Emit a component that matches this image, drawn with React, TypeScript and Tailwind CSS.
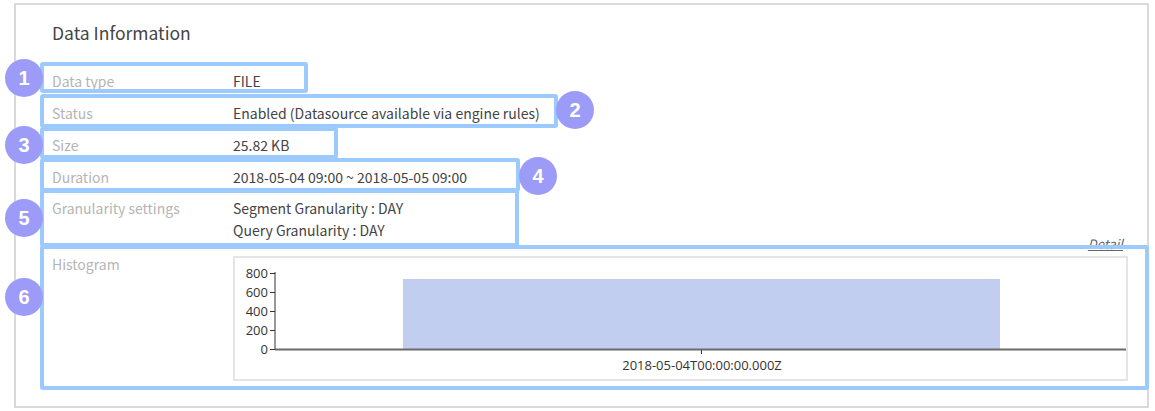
const rows = [
  { label: "Data type", value: "FILE" },
  { label: "Status", value: "Enabled (Datasource available via engine rules)" },
  { label: "Size", value: "25.82 KB" },
  { label: "Duration", value: "2018-05-04 09:00 ~ 2018-05-05 09:00" },
];

const yTicks = [
  { v: "800", y: 17 },
  { v: "600", y: 36 },
  { v: "400", y: 55 },
  { v: "200", y: 74 },
  { v: "0", y: 93 },
];

function Histogram() {
  return (
    <div className="relative w-[895px] h-[125px] border-2 border-[#e5e5e5] mt-[2px]">
      <svg width="891" height="121" className="block">
        <rect x="168" y="21" width="597" height="70" fill="#c1cef0" />
        <line x1="40" y1="14" x2="40" y2="92" stroke="#333" strokeWidth="1" />
        <line x1="40" y1="91.5" x2="891" y2="91.5" stroke="#6b6b6b" strokeWidth="2" />
        {yTicks.map((t) => (
          <g key={t.v}>
            <line x1="35" y1={t.y - 2 + 0.5} x2="40" y2={t.y - 2 + 0.5} stroke="#333" />
            <text
              x="33"
              y={t.y + 2.5}
              textAnchor="end"
              fontSize="13"
              fill="#333"
              fontFamily="'Open Sans', sans-serif"
            >
              {t.v}
            </text>
          </g>
        ))}
        <line x1="466.5" y1="92" x2="466.5" y2="96" stroke="#333" />
        <text
          x="467"
          y="112"
          textAnchor="middle"
          fontSize="13"
          fill="#333"
          fontFamily="'Open Sans', sans-serif"
        >
          2018-05-04T00:00:00.000Z
        </text>
      </svg>
    </div>
  );
}

function Marker({ n, x, y }: { n: number; x: number; y: number }) {
  return (
    <div
      className="absolute w-[38px] h-[38px] rounded-full bg-[#9c9cf8] flex items-center justify-center text-white text-[20px] font-bold font-['Liberation_Sans',sans-serif]"
      style={{ left: x - 19, top: y - 19 }}
    >
      {n}
    </div>
  );
}

function HighlightBox({ l, t, w, h }: { l: number; t: number; w: number; h: number }) {
  return (
    <div
      className="absolute border-4 border-[#9ccafc] rounded-[3px]"
      style={{ left: l, top: t, width: w, height: h }}
    />
  );
}

export default function App() {
  return (
    <div className="relative w-[1155px] h-[411px] bg-white font-['Noto_Sans_CJK_KR','Noto_Sans',sans-serif] overflow-hidden">
      <div className="ml-[14px] mt-[3px] w-[1135px] h-[405px] border-2 border-[#dadada] pl-[36px] pt-[16px]">
        <h2 className="text-[17.5px] leading-6 text-[#444]">Data Information</h2>
        <div className="mt-[20px]">
          {rows.map((r) => (
            <div key={r.label} className="flex items-center h-8 text-[14px]">
              <div className="w-[181px] text-[#b5b5b5]">{r.label}</div>
              <div className="text-[#444]">{r.value}</div>
            </div>
          ))}
          <div className="flex h-[61px] pt-[4px] pb-[1px] text-[14px] leading-[22px]">
            <div className="w-[181px] text-[#b5b5b5]">Granularity settings</div>
            <div className="text-[#444]">
              <div>Segment Granularity : DAY</div>
              <div>Query Granularity : DAY</div>
            </div>
          </div>
          <div className="relative flex text-[14px] leading-5">
            <div className="w-[181px] text-[#b5b5b5]">Histogram</div>
            <Histogram />
            <a className="absolute right-[24px] -top-[20px] text-[13px] italic underline text-[#666] cursor-pointer">
              Detail
            </a>
          </div>
        </div>
      </div>

      <HighlightBox l={40} t={62} w={268} h={31} />
      <HighlightBox l={40} t={94} w={518} h={34} />
      <HighlightBox l={40} t={127} w={298} h={32} />
      <HighlightBox l={40} t={158} w={480} h={34} />
      <HighlightBox l={40} t={189} w={479} h={58} />
      <HighlightBox l={40} t={245} w={1109} h={145} />

      <Marker n={1} x={24} y={78} />
      <Marker n={2} x={575} y={110} />
      <Marker n={3} x={24} y={145} />
      <Marker n={4} x={538} y={176} />
      <Marker n={5} x={24} y={218} />
      <Marker n={6} x={24} y={297} />
    </div>
  );
}
